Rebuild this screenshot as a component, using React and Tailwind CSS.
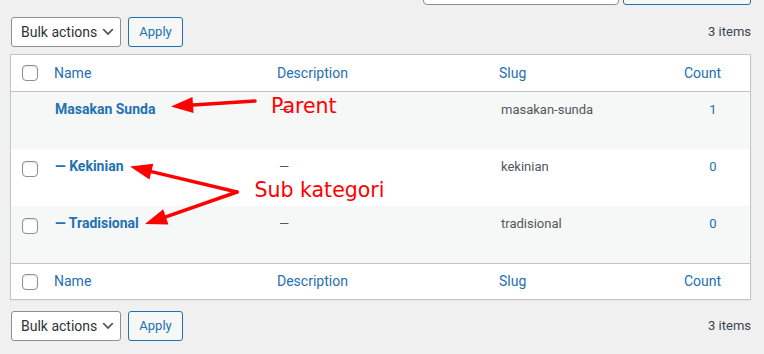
const rows = [
  { name: 'Masakan Sunda', slug: 'masakan-sunda', count: 1, check: false, bg: 'bg-[#f6f7f7]' },
  { name: '— Kekinian', slug: 'kekinian', count: 0, check: true, bg: 'bg-white' },
  { name: '— Tradisional', slug: 'tradisional', count: 0, check: true, bg: 'bg-[#f6f7f7]' },
];

const cols = 'grid grid-cols-[35px_223px_222px_185px_1fr]';

const Checkbox = () => (
  <span className="block w-4 h-4 rounded-[4px] border border-[#8c8f94] bg-white shadow-[inset_0_1px_2px_rgba(0,0,0,0.1)]" />
);

const TableNav = () => (
  <div className="flex items-center justify-between h-[30px]">
    <div className="flex items-center gap-[7px] pl-px">
      <div className="flex items-center justify-between w-[110px] h-[30px] pl-[9px] pr-[4px] rounded-[3px] border border-[#8c8f94] bg-white text-[14px] text-[#2c3338]">
        <span>Bulk actions</span>
        <svg width="16" height="16" viewBox="0 0 20 20">
          <path d="M5 6l5 5 5-5 2 1-7 7-7-7 2-1z" fill="#555" />
        </svg>
      </div>
      <button className="w-[55px] h-[30px] rounded-[3px] border border-[#2271b1] bg-[#f6f7f7] text-[13px] text-[#2271b1]">
        Apply
      </button>
    </div>
    <span className="text-[13px] text-[#3c434a]">3 items</span>
  </div>
);

const HeadRow = ({ className }) => (
  <div className={`${cols} items-center text-[14px] text-[#2271b1] ${className}`}>
    <div className="pl-[11px]"><Checkbox /></div>
    <div className="pl-[8px]">Name</div>
    <div className="pl-[8px]">Description</div>
    <div className="pl-[8px]">Slug</div>
    <div className="pl-[8px]">Count</div>
  </div>
);

export default function App() {
  return (
    <div className="relative min-h-screen overflow-hidden bg-[#f0f0f1] pl-[10px] pr-[13px] font-[Roboto,sans-serif]">
      {/* search box + button, cut off at the top */}
      <div className="flex justify-end gap-[4px] -mt-[25px] h-[30px]">
        <div className="w-[196px] h-[30px] rounded-[4px] border border-[#8c8f94] bg-white" />
        <div className="w-[128px] h-[30px] rounded-[3px] border border-[#2271b1] bg-[#f6f7f7]" />
      </div>

      <div className="mt-[12px]">
        <TableNav />
      </div>

      {/* Terms table */}
      <div className="mt-[7px] border border-[#c3c4c7] bg-white shadow-[0_1px_1px_rgba(0,0,0,0.04)]">
        <HeadRow className="h-[37px] border-b border-[#c3c4c7]" />
        {rows.map((r) => (
          <div key={r.slug} className={`${cols} h-[57px] items-start pt-[8px] leading-[19.5px] ${r.bg}`}>
            <div className="pl-[11px] pt-[4px]">{r.check && <Checkbox />}</div>
            <div className="pl-[9px] text-[14px] font-bold text-[#2271b1]">{r.name}</div>
            <div className="pl-[10px] text-[13px] text-[#50575e]">—</div>
            <div className="pl-[10px] text-[13px] text-[#50575e]">{r.slug}</div>
            <div className="text-center text-[13px] text-[#2271b1]">{r.count}</div>
          </div>
        ))}
        <HeadRow className="h-[36px] border-t border-[#c3c4c7]" />
      </div>

      <div className="mt-[11px]">
        <TableNav />
      </div>

      {/* red annotations */}
      <svg className="absolute inset-0 pointer-events-none" width="764" height="354">
        <g stroke="#f00" strokeWidth="3.5" strokeLinecap="round" fill="#f00">
          <line x1="255" y1="101" x2="193" y2="105" />
          <line x1="237" y1="192" x2="151.4" y2="171.6" />
          <line x1="237" y1="192" x2="165.8" y2="216.8" />
        </g>
        <g fill="#f00">
          <polygon points="171,106.5 192.5,97 193.5,113" />
          <polygon points="130,166.5 153.3,163.8 149.5,179.4" />
          <polygon points="145,224 163.2,209.2 168.4,224.4" />
        </g>
        <g fill="#f00" fontFamily="'DejaVu Sans', sans-serif" fontSize="20.5">
          <text x="271" y="113.3">Parent</text>
          <text x="254.5" y="197.3">Sub kategori</text>
        </g>
      </svg>
    </div>
  );
}
